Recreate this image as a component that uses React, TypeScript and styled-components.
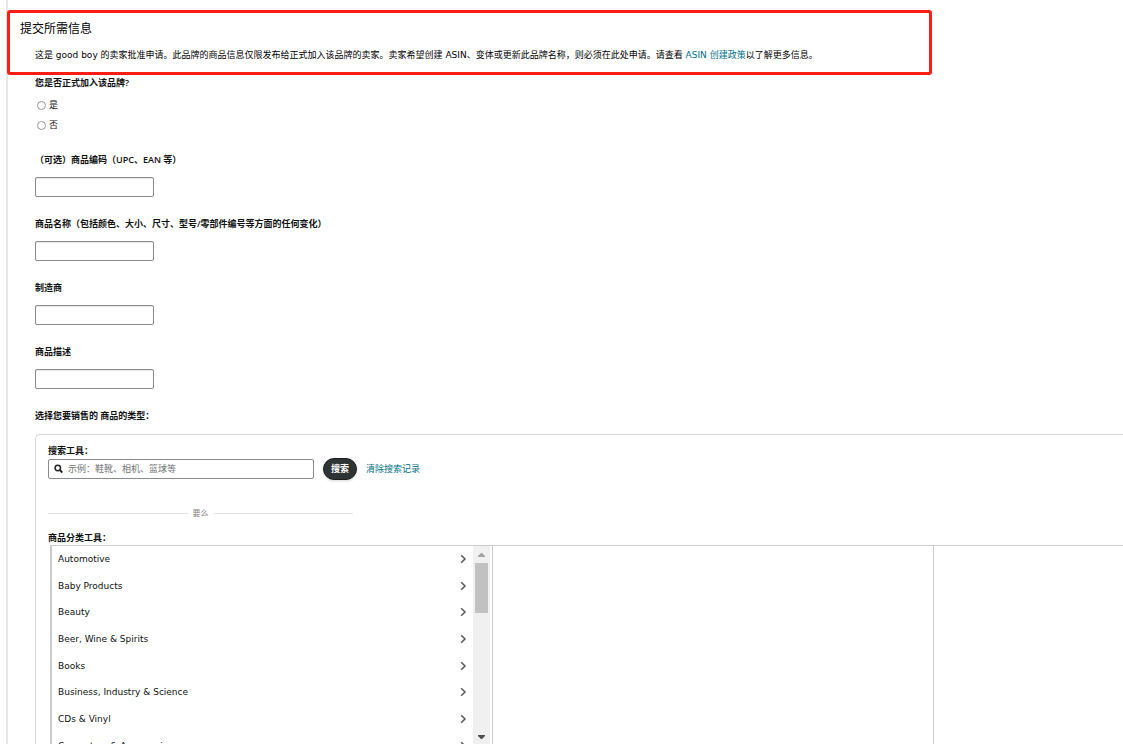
import React from "react";
import styled, { createGlobalStyle } from "styled-components";

const GlobalStyle = createGlobalStyle`
  *, *::before, *::after { box-sizing: border-box; }
  body {
    margin: 0;
    background: #fff;
    color: #0f1111;
    font-family: "Open Sans", "Noto Sans CJK SC", sans-serif;
    font-size: 9px;
    line-height: 16px;
  }
`;

const Page = styled.div`
  height: 100vh;
  overflow: hidden;
  padding-left: 6px;
`;

const Content = styled.main`
  display: flex;
  flex-direction: column;
  height: 100%;
  padding-top: 10px;
  border-left: 2px solid #e7e7e7;
`;

const Notice = styled.section`
  flex: none;
  max-width: 925px;
  height: 65px;
  margin-left: -1px;
  padding: 8px 10px;
  border: 3px solid #ff1e14;
  border-radius: 3px;
`;

const Title = styled.h1`
  margin: 0 0 10px;
  color: #000;
  font-size: 12px;
  font-weight: 400;
  line-height: 16px;
`;

const Intro = styled.p`
  margin: 0 0 0 15px;
  color: #000;
  font-family: "DejaVu Sans", "Noto Sans CJK SC", sans-serif;
  white-space: nowrap;
`;

const TextLink = styled.a`
  color: #007185;
  text-decoration: none;
`;

const Form = styled.form`
  display: flex;
  flex: 1;
  flex-direction: column;
  min-height: 0;
  padding-left: 27px;
`;

const Choices = styled.fieldset`
  flex: none;
  margin: 0 0 15px;
  padding: 0;
  border: 0;
`;

const Legend = styled.legend`
  margin-bottom: 6px;
  padding: 0;
  font-weight: 600;
`;

const Choice = styled.label`
  display: flex;
  align-items: center;
  gap: 3px;
  height: 16px;
  margin: 0 0 4px 2px;
`;

const Radio = styled.input`
  appearance: none;
  width: 9px;
  height: 9px;
  margin: 0;
  border: 1px solid #949494;
  border-radius: 50%;
  background: #fff;

  &:checked { border: 3px solid #007185; }
`;

const Field = styled.div`
  display: flex;
  flex: none;
  flex-direction: column;
  align-items: flex-start;
  gap: 9px;
  height: 64px;
`;

const Label = styled.label`
  font-weight: 600;
  white-space: nowrap;
`;

const Caption = styled.div`
  flex: none;
  height: 26px;
  font-weight: 600;
`;

const TextInput = styled.input`
  width: 119px;
  height: 20px;
  padding: 0 6px;
  border: 1px solid #888c8c;
  border-radius: 2px;
  background: #fff;
  box-shadow: inset 0 1px 1px #e6e8e8;
  font: inherit;
`;

const Picker = styled.section`
  display: flex;
  flex: 1;
  flex-direction: column;
  min-height: 0;
  padding: 8px 0 0 12px;
  border: 1px solid #d5d9d9;
  border-width: 1px 0 0 1px;
  border-radius: 5px 0 0 0;
`;

const SearchRow = styled.div`
  display: flex;
  align-items: center;
  gap: 9px;
  height: 20px;
`;

const SearchBox = styled.div`
  display: flex;
  align-items: center;
  gap: 5px;
  width: 266px;
  height: 20px;
  padding: 0 5px;
  border: 1px solid #888c8c;
  border-radius: 2px;
`;

const SearchInput = styled.input`
  flex: 1;
  min-width: 0;
  padding: 0;
  border: 0;
  outline: 0;
  background: none;
  font: inherit;

  &::placeholder { color: #6f7373; opacity: 1; }
`;

const SearchButton = styled.button`
  width: 34px;
  height: 22px;
  padding: 0;
  border: 1px solid #1c1f1f;
  border-radius: 11px;
  background: #303333;
  box-shadow: 0 1px 3px #d5d9d9;
  color: #fff;
  font: inherit;
  font-weight: 600;
`;

const Divider = styled.div`
  display: flex;
  align-items: center;
  gap: 5px;
  width: 305px;
  height: 16px;
  margin: 26px 0 10px;
  color: #8c8080;
  font-size: 8px;

  &::before, &::after {
    flex: 1;
    height: 1px;
    background: #e3e3e3;
    content: "";
  }
`;

const BrowseTitle = styled.div`
  font-weight: 600;
  line-height: 14px;
`;

const Columns = styled.div`
  display: grid;
  flex: 1;
  grid-template-columns: 441px 441px 1fr;
  min-height: 0;
  margin-left: 2px;
  border: solid #ccc;
  border-width: 1px 0 0 2px;
`;

const Column = styled.div`
  display: flex;
  min-height: 0;
  overflow: hidden;
  padding-right: 2px;
  border-right: 1px solid #ccc;

  &:last-child { border-right: 0; }
`;

const CategoryList = styled.ul`
  display: grid;
  flex: 1;
  grid-template-rows: repeat(9, 1fr);
  height: 240px;
  margin: 0;
  padding: 0;
  list-style: none;
`;

const Category = styled.button`
  display: flex;
  align-items: center;
  justify-content: space-between;
  width: 100%;
  height: 26px;
  padding: 0 6px;
  border: 0;
  background: none;
  color: inherit;
  font: inherit;
  font-family: "DejaVu Sans", sans-serif;
`;

const Track = styled.div`
  display: flex;
  flex-direction: column;
  align-items: center;
  width: 17px;
  background: #f0f0f0;
`;

const Thumb = styled.div`
  width: 13px;
  height: 50px;
  margin-bottom: auto;
  background: #c1c1c1;
`;

const Arrow = ({ down }: { down?: boolean }) => (
  <svg width="17" height="17" viewBox="0 0 17 17" aria-hidden="true">
    <path d={down ? "M5 8h7v1L9 12H8L5 9z" : "M5 11h7v-1L9 7H8l-3 3z"} fill={down ? "#505050" : "#a3a3a3"} />
  </svg>
);

const Chevron = () => (
  <svg width="7" height="10" viewBox="0 0 7 10" fill="none" aria-hidden="true">
    <path d="M1.2 1.2L5 5L1.2 8.8" stroke="#565959" strokeWidth="1.5" />
  </svg>
);

const Magnifier = () => (
  <svg width="9" height="10" viewBox="0 0 9 10" fill="none" aria-hidden="true">
    <circle cx="3.8" cy="4" r="2.7" stroke="#222" strokeWidth="1.5" />
    <path d="M5.8 6L8.3 8.5" stroke="#222" strokeWidth="1.8" />
  </svg>
);

const fields = [
  { id: "code", label: "（可选）商品编码（UPC、EAN 等）" },
  { id: "name", label: "商品名称（包括颜色、大小、尺寸、型号/零部件编号等方面的任何变化）" },
  { id: "maker", label: "制造商" },
  { id: "description", label: "商品描述" },
];

const categories = [
  "Automotive",
  "Baby Products",
  "Beauty",
  "Beer, Wine & Spirits",
  "Books",
  "Business, Industry & Science",
  "CDs & Vinyl",
  "Computers & Accessories",
];

export default function App() {
  return (
    <Page lang="zh-CN">
      <GlobalStyle />
      <Content>
        <Notice>
          <Title>提交所需信息</Title>
          <Intro>
            这是 good boy 的卖家批准申请。此品牌的商品信息仅限发布给正式加入该品牌的卖家。卖家希望创建
            {" ASIN、变体或更新此品牌名称，则必须在此处申请。请查看 "}
            <TextLink href="#policy">ASIN 创建政策</TextLink>以了解更多信息。
          </Intro>
        </Notice>
        <Form onSubmit={(e) => e.preventDefault()}>
          <Choices>
            <Legend>您是否正式加入该品牌?</Legend>
            <Choice><Radio type="radio" name="member" value="yes" />是</Choice>
            <Choice><Radio type="radio" name="member" value="no" />否</Choice>
          </Choices>
          {fields.map((f) => (
            <Field key={f.id}>
              <Label htmlFor={f.id}>{f.label}</Label>
              <TextInput id={f.id} type="text" />
            </Field>
          ))}
          <Caption>选择您要销售的 商品的类型：</Caption>
          <Picker>
            <Label htmlFor="search">搜索工具：</Label>
            <SearchRow>
              <SearchBox>
                <Magnifier />
                <SearchInput id="search" type="text" placeholder="示例：鞋靴、相机、篮球等" />
              </SearchBox>
              <SearchButton type="submit">搜索</SearchButton>
              <TextLink href="#clear">清除搜索记录</TextLink>
            </SearchRow>
            <Divider>要么</Divider>
            <BrowseTitle>商品分类工具：</BrowseTitle>
            <Columns>
              <Column>
                <CategoryList>
                  {categories.map((c) => (
                    <li key={c}>
                      <Category type="button">{c}<Chevron /></Category>
                    </li>
                  ))}
                </CategoryList>
                <Track>
                  <Arrow />
                  <Thumb />
                  <Arrow down />
                </Track>
              </Column>
              <Column />
              <Column />
            </Columns>
          </Picker>
        </Form>
      </Content>
    </Page>
  );
}
